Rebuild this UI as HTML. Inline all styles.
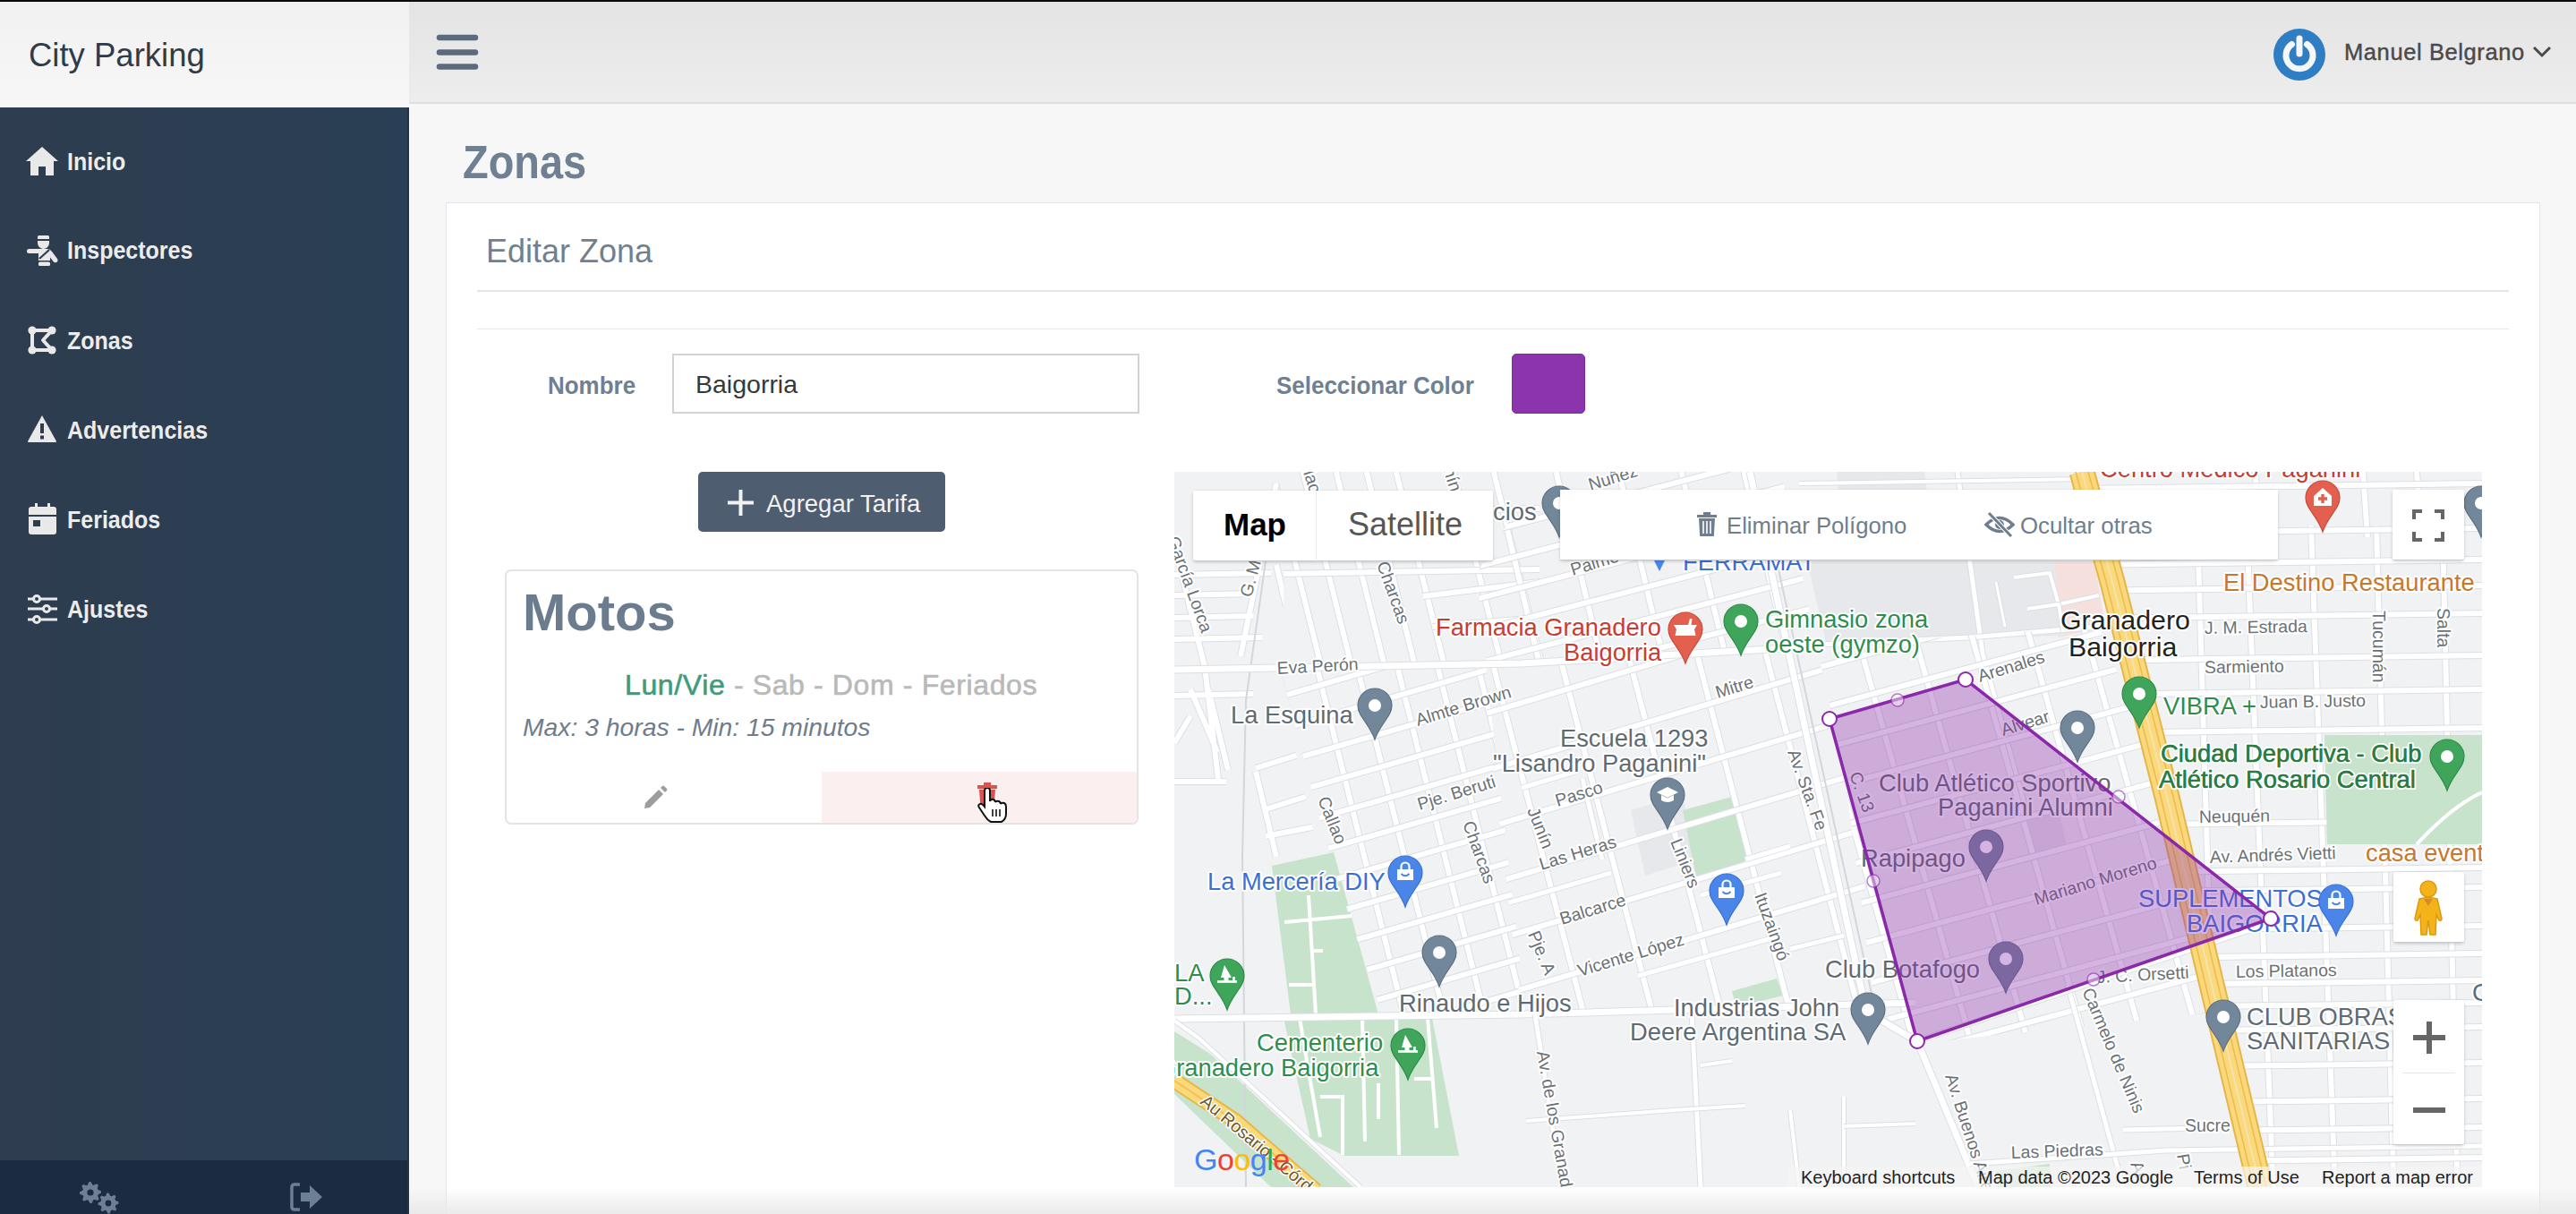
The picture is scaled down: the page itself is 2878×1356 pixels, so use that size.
<!DOCTYPE html>
<html><head><meta charset="utf-8"><title>City Parking - Zonas</title>
<style>
*{box-sizing:border-box;margin:0;padding:0}
html,body{width:2878px;height:1356px;overflow:hidden}
body{position:relative;background:#f7f7f7;font-family:"Liberation Sans",sans-serif}
.a{position:absolute;white-space:nowrap;line-height:1}
#topline{position:absolute;left:0;top:0;width:2878px;height:2px;background:#0a0a0a}
#brand{position:absolute;left:0;top:2px;width:457px;height:118px;background:linear-gradient(#f1f1f1,#f7f7f7)}
#topbar{position:absolute;left:457px;top:2px;width:2421px;height:114px;background:linear-gradient(#e4e4e4,#ededed);border-bottom:2px solid #dcdfe3}
#side{position:absolute;left:0;top:120px;width:457px;height:1176px;background:linear-gradient(90deg,#2e3d4f,#2a3f55)}
#sidefoot{position:absolute;left:0;top:1296px;width:457px;height:60px;background:#1b2b40}
#sideedge{position:absolute;left:455px;top:120px;width:2px;height:1236px;background:#243140}
.nav{position:absolute;left:75px;color:#ececec;font-weight:bold;font-size:25px}
.ico{position:absolute}
#card{position:absolute;left:498px;top:226px;width:2340px;height:1140px;background:#fff;border:1px solid #e3e6ea}
#bottomshade{position:absolute;left:457px;top:1326px;width:2421px;height:30px;background:linear-gradient(rgba(236,236,236,0.0),rgba(232,232,232,0.9))}
</style></head><body>
<div id="topline"></div><div id="brand"></div><div id="topbar"></div>
<div id="side"></div><div id="sidefoot"></div>
<div class="a" style="left:32.0px;top:44.1px;font-size:36.5px;color:#2f3b48;font-weight:normal;font-style:normal;">City Parking</div>
<svg class="ico" style="left:486px;top:36px" width="50" height="46" viewBox="0 0 50 46"><g stroke="#5a6b80" stroke-width="6.5" stroke-linecap="round"><line x1="5" y1="6" x2="45" y2="6"/><line x1="5" y1="22.5" x2="45" y2="22.5"/><line x1="5" y1="38.5" x2="45" y2="38.5"/></g></svg>
<svg class="ico" style="left:2538px;top:30px" width="62" height="62" viewBox="0 0 62 62"><circle cx="31" cy="31" r="29" fill="#2f7dc2"/><path d="M22.5 19.5 A15 15 0 1 0 39.5 19.5" fill="none" stroke="#f4f6f8" stroke-width="7" stroke-linecap="round"/><line x1="31" y1="13" x2="31" y2="30" stroke="#f4f6f8" stroke-width="7" stroke-linecap="round"/></svg>
<div class="a" style="left:2619.0px;top:46.4px;font-size:25.5px;color:#4a4a4a;font-weight:normal;font-style:normal;letter-spacing:0.6px;-webkit-text-stroke:0.45px #4a4a4a">Manuel Belgrano</div>
<svg class="ico" style="left:2828px;top:50px" width="24" height="16" viewBox="0 0 24 16"><path d="M3 3 L12 12 L21 3" fill="none" stroke="#4a4a4a" stroke-width="3"/></svg>
<div class="a" style="left:75.0px;top:166.9px;font-size:27.3px;color:#ececec;font-weight:bold;font-style:normal;transform:scaleX(0.916);transform-origin:0 0;">Inicio</div>
<div class="a" style="left:75.0px;top:265.9px;font-size:27.3px;color:#ececec;font-weight:bold;font-style:normal;transform:scaleX(0.916);transform-origin:0 0;">Inspectores</div>
<div class="a" style="left:75.0px;top:366.9px;font-size:27.3px;color:#ececec;font-weight:bold;font-style:normal;transform:scaleX(0.916);transform-origin:0 0;">Zonas</div>
<div class="a" style="left:75.0px;top:466.9px;font-size:27.3px;color:#ececec;font-weight:bold;font-style:normal;transform:scaleX(0.916);transform-origin:0 0;">Advertencias</div>
<div class="a" style="left:75.0px;top:566.9px;font-size:27.3px;color:#ececec;font-weight:bold;font-style:normal;transform:scaleX(0.916);transform-origin:0 0;">Feriados</div>
<div class="a" style="left:75.0px;top:666.9px;font-size:27.3px;color:#ececec;font-weight:bold;font-style:normal;transform:scaleX(0.916);transform-origin:0 0;">Ajustes</div>
<svg class="ico" style="left:27px;top:162px" width="40" height="36" viewBox="0 0 40 36"><path d="M20 2 L38 18 L33 18 L33 34 L24 34 L24 24 L16 24 L16 34 L7 34 L7 18 L2 18 Z" fill="#e9e9e9"/></svg>
<svg class="ico" style="left:30px;top:262px" width="36" height="36" viewBox="0 0 36 36"><path d="M12 2.5 Q12 1 13.5 1 L23.5 1 Q25 1 25 2.5 L25 5 L12 5Z" fill="#e9e9e9"/><path d="M12 7 h13 v2.5 a6.5 6.5 0 0 1 -13 0z" fill="#e9e9e9"/><path d="M2.5 16 h13 v5 h-13 a2.5 2.5 0 0 1 0 -5z" fill="#e9e9e9"/><path d="M13 16 L23 16 Q26 16 28 19 L34 27 Q35.5 29.5 33 31 Q31 32 29.5 30 L26 25.5 L26 29 L13 29Z" fill="#e9e9e9"/><line x1="14" y1="27" x2="25" y2="17" stroke="#2d3e51" stroke-width="2.2"/><rect x="13" y="30.5" width="13" height="4.5" rx="1.5" fill="#e9e9e9"/></svg>
<svg class="ico" style="left:31px;top:364px" width="32" height="32" viewBox="0 0 32 32"><path d="M5 5 L27 5 L17 16 L27 27 L5 27 Z" fill="none" stroke="#e9e9e9" stroke-width="4" stroke-linejoin="round"/><g fill="#e9e9e9"><circle cx="5" cy="5" r="4.6"/><circle cx="27" cy="5" r="4.6"/><circle cx="5" cy="27" r="4.6"/><circle cx="27" cy="27" r="4.6"/></g></svg>
<svg class="ico" style="left:30px;top:463px" width="34" height="32" viewBox="0 0 34 32"><path d="M17 1 L33 30 Q33 31 32 31 L2 31 Q1 31 1 30 Z" fill="#e9e9e9"/><rect x="15" y="10" width="4" height="11" fill="#2e3e50"/><rect x="15" y="23.5" width="4" height="4" fill="#2e3e50"/></svg>
<svg class="ico" style="left:32px;top:562px" width="31" height="35" viewBox="0 0 31 35"><rect x="7" y="0" width="3" height="6" fill="#e9e9e9"/><rect x="21" y="0" width="3" height="6" fill="#e9e9e9"/><path d="M3 4 h25 a3 3 0 0 1 3 3 v6 h-31 v-6 a3 3 0 0 1 3 -3z" fill="#e9e9e9"/><path d="M0 15 h31 v17 a3 3 0 0 1 -3 3 h-25 a3 3 0 0 1 -3 -3z" fill="#e9e9e9"/><rect x="5" y="19" width="8" height="7" fill="#2e3e50"/></svg>
<svg class="ico" style="left:30px;top:664px" width="35" height="34" viewBox="0 0 35 34"><g stroke="#e9e9e9" stroke-width="3" fill="none"><line x1="1" y1="5" x2="34" y2="5"/><line x1="1" y1="16" x2="34" y2="16"/><line x1="1" y1="28" x2="34" y2="28"/></g><g fill="#2e3e50" stroke="#e9e9e9" stroke-width="3"><circle cx="11" cy="5" r="3.5"/><circle cx="22" cy="16" r="3.5"/><circle cx="11" cy="28" r="3.5"/></g></svg>
<svg class="ico" style="left:86px;top:1318px" width="52" height="38" viewBox="0 0 52 38"><path d="M26.87,12.24 L26.99,14.59 L23.73,16.19 L23.14,17.85 L24.64,21.15 L23.06,22.89 L19.63,21.72 L18.03,22.47 L16.76,25.87 L14.41,25.99 L12.81,22.73 L11.15,22.14 L7.85,23.64 L6.11,22.06 L7.28,18.63 L6.53,17.03 L3.13,15.76 L3.01,13.41 L6.27,11.81 L6.86,10.15 L5.36,6.85 L6.94,5.11 L10.37,6.28 L11.97,5.53 L13.24,2.13 L15.59,2.01 L17.19,5.27 L18.85,5.86 L22.15,4.36 L23.89,5.94 L22.72,9.37 L23.47,10.97Z" fill="#6d7f95"/><circle cx="15" cy="14" r="3.6" fill="#1b2b40"/><path d="M46.38,24.31 L46.49,26.56 L43.34,28.09 L42.77,29.68 L44.24,32.85 L42.72,34.52 L39.42,33.38 L37.90,34.10 L36.69,37.38 L34.44,37.49 L32.91,34.34 L31.32,33.77 L28.15,35.24 L26.48,33.72 L27.62,30.42 L26.90,28.90 L23.62,27.69 L23.51,25.44 L26.66,23.91 L27.23,22.32 L25.76,19.15 L27.28,17.48 L30.58,18.62 L32.10,17.90 L33.31,14.62 L35.56,14.51 L37.09,17.66 L38.68,18.23 L41.85,16.76 L43.52,18.28 L42.38,21.58 L43.10,23.10Z" fill="#6d7f95"/><circle cx="35" cy="26" r="3.4" fill="#1b2b40"/></svg>
<svg class="ico" style="left:324px;top:1320px" width="38" height="34" viewBox="0 0 38 34"><path d="M11 3 L5 3 Q2 3 2 6 L2 28 Q2 31 5 31 L11 31" fill="none" stroke="#6d7f95" stroke-width="3.5"/><path d="M12 12 L22 12 L22 4 L36 17 L22 30 L22 22 L12 22 Z" fill="#6d7f95"/></svg>
<div class="a" style="left:517.0px;top:155.5px;font-size:51px;color:#6f8093;font-weight:bold;font-style:normal;transform:scaleX(0.92);transform-origin:0 0;">Zonas</div>
<div id="card"></div>
<div class="a" style="left:543.0px;top:261.5px;font-size:37px;color:#737f8d;font-weight:normal;font-style:normal;transform:scaleX(0.973);transform-origin:0 0;">Editar Zona</div>
<div class="a" style="left:533px;top:324px;width:2270px;height:2px;background:#e6e6e6"></div>
<div class="a" style="left:533px;top:367px;width:2270px;height:1px;background:#e9e9e9"></div>
<div class="a" style="left:612.0px;top:417.1px;font-size:27.6px;color:#6f8093;font-weight:bold;font-style:normal;transform:scaleX(0.941);transform-origin:0 0;">Nombre</div>
<div class="a" style="left:751px;top:395px;width:522px;height:67px;border:2px solid #d2d2d2;background:#fff"></div>
<div class="a" style="left:777.0px;top:414.9px;font-size:28.5px;color:#383838;font-weight:normal;font-style:normal;">Baigorria</div>
<div class="a" style="left:1426.0px;top:417.1px;font-size:27.6px;color:#6f8093;font-weight:bold;font-style:normal;transform:scaleX(0.941);transform-origin:0 0;">Seleccionar Color</div>
<div class="a" style="left:1689px;top:395px;width:82px;height:67px;background:#8c34ae;border-radius:5px;border:1px solid #7a2c9a"></div>
<div class="a" style="left:780px;top:527px;width:276px;height:67px;background:#4e5e70;border-radius:5px"></div>
<svg class="ico" style="left:812px;top:546px" width="31" height="31" viewBox="0 0 31 31"><g stroke="#f2f2f2" stroke-width="4"><line x1="15.5" y1="1" x2="15.5" y2="30"/><line x1="1" y1="15.5" x2="30" y2="15.5"/></g></svg>
<div class="a" style="left:856.0px;top:548.7px;font-size:27.5px;color:#f2f2f2;font-weight:normal;font-style:normal;">Agregar Tarifa</div>
<div class="a" style="left:564px;top:636px;width:708px;height:285px;border:2px solid #e4e4e4;border-radius:7px;background:#fff"></div>
<div class="a" style="left:918px;top:862px;width:352px;height:57px;background:#fcefef;border-bottom-right-radius:6px"></div>
<div class="a" style="left:584.0px;top:654.9px;font-size:58px;color:#6b7c8f;font-weight:bold;font-style:normal;">Motos</div>
<div class="a" style="left:698px;top:748.9px;font-size:32px;letter-spacing:0.63px"><span style="color:#3e9b7b;-webkit-text-stroke:0.6px #3e9b7b">Lun/Vie</span><span style="color:#b9b9b9;-webkit-text-stroke:0.6px #b9b9b9"> - Sab - Dom - Feriados</span></div>
<div class="a" style="left:584.0px;top:798.0px;font-size:28.3px;color:#6e7d8c;font-weight:normal;font-style:italic;">Max: 3 horas - Min: 15 minutos</div>
<svg class="ico" style="left:717px;top:876px" width="30" height="30" viewBox="0 0 30 30"><path d="M4 21 L19 6 L24 11 L9 26 L3 27 Z" fill="#9d9d9d"/><path d="M21 4 L23 2 Q24 1 25 2 L28 5 Q29 6 28 7 L26 9 Z" fill="#9d9d9d"/></svg>
<svg class="ico" style="left:1090px;top:874px" width="26" height="30" viewBox="0 0 26 30"><rect x="2" y="3" width="22" height="4" fill="#d9534f"/><rect x="9" y="0" width="8" height="4" fill="#d9534f"/><path d="M4 8 h18 l-1.5 20 h-15z" fill="#d9534f"/></svg>
<svg class="ico" style="left:1092px;top:880px" width="34" height="40" viewBox="0 0 34 40"><path d="M8 3 Q8 0 11 0 Q14 0 14 3 L14 15 Q15 12 18 13 Q20 14 20 16 Q21 14 24 15 Q26 16 26 18 Q27 16 30 17 Q32 18 32 21 L32 29 Q32 35 27 38 L15 38 Q11 36 8 31 L2 22 Q0 19 3 18 Q5 17 8 21 Z" fill="#fff" stroke="#111" stroke-width="2"/><g stroke="#111" stroke-width="1.6"><line x1="17" y1="24" x2="17" y2="32"/><line x1="21" y1="24" x2="21" y2="32"/><line x1="25" y1="24" x2="25" y2="32"/></g></svg>
<svg class="a" style="left:1312px;top:527px" width="1461" height="799" viewBox="1312 527 1461 799">
<defs><clipPath id="mc"><rect x="1312" y="527" width="1461" height="799"/></clipPath>
<clipPath id="rC"><polygon points="1440,527 2010,527 2075,1000 2095,1128 1545,1136 1470,940 1430,760"/></clipPath>
<clipPath id="rP"><polygon points="2010,527 2328,527 2360,650 2421,890 2470,1100 2380,1120 2150,1165 2095,1128 2075,1000"/></clipPath>
<clipPath id="rE"><polygon points="2328,527 2773,527 2773,1326 2525,1326 2421,890 2360,650"/></clipPath>
<clipPath id="rW"><polygon points="1312,527 1440,527 1430,760 1470,940 1545,1136 1312,1140"/></clipPath>
</defs>
<g clip-path="url(#mc)">
<rect x="1312" y="527" width="1461" height="799" fill="#f1f2f4"/>
<polygon points="1822,905 1880,888 1895,960 1838,978" fill="#e6e8eb"/>
<polygon points="2052,527 2150,527 2160,600 2060,610" fill="#e6e8eb"/>
<polygon points="2260,913 2300,905 2310,950 2270,958" fill="#e6e8eb"/>
<polygon points="2290,627 2340,627 2352,700 2300,712" fill="#f6e0dd"/>
<polygon points="1421,967 1490,952 1540,1133 1442,1133" fill="#c8e3cc"/>
<polygon points="1434,1137 1600,1137 1630,1291 1502,1291 1464,1272" fill="#c8e3cc"/>
<polygon points="1312,1152 1352,1177 1512,1326 1420,1326 1312,1222" fill="#c8e3cc"/>
<polygon points="2597,821 2773,821 2773,943 2600,943" fill="#c8e3cc"/>
<polygon points="1880,905 1935,890 1955,965 1895,980" fill="#c8e3cc"/>
<polygon points="2230,1308 2290,1300 2292,1326 2232,1326" fill="#c8e3cc"/>
<polygon points="1935,1107 1985,1093 1992,1112 1940,1125" fill="#c8e3cc"/>
<g stroke="#fff" stroke-width="4" fill="none"><path d="M1462 1000 L1470 1133 M1435 1030 L1510 1023 M1440 1100 L1468 1100 M1468 1062 L1478 1062"/><path d="M1452 1137 L1460 1185 L1475 1270 M1475 1225 L1500 1225 L1500 1290 M1522 1137 L1525 1275 M1560 1137 L1563 1290 M1580 1205 L1600 1205 M1595 1137 L1605 1260 M1540 1210 L1540 1250"/></g>
<clipPath id="rC1"><polygon points="1428,527 1720,527 1730,742 1440,745"/></clipPath>
<g clip-path="url(#rC1)"><path d="M1421.8 527.0L1476.2 745.0M1455.8 527.0L1510.2 745.0M1492.8 527.0L1547.2 745.0M1526.8 527.0L1581.2 745.0M1559.8 527.0L1614.2 745.0M1623.8 527.0L1678.2 745.0M1668.8 527.0L1723.2 745.0" stroke="#dcdfe3" stroke-width="8" fill="none"/><path d="M1421.8 527.0L1476.2 745.0M1455.8 527.0L1510.2 745.0M1492.8 527.0L1547.2 745.0M1526.8 527.0L1581.2 745.0M1559.8 527.0L1614.2 745.0M1623.8 527.0L1678.2 745.0M1668.8 527.0L1723.2 745.0" stroke="#ffffff" stroke-width="6" fill="none"/></g>
<g clip-path="url(#rC1)"><path d="M1428.0 574.0L1720.0 568.0M1428.0 641.0L1720.0 636.0M1590.0 666.0L1720.0 650.0M1600.0 700.0L1720.0 690.0" stroke="#dcdfe3" stroke-width="8" fill="none"/><path d="M1428.0 574.0L1720.0 568.0M1428.0 641.0L1720.0 636.0M1590.0 666.0L1720.0 650.0M1600.0 700.0L1720.0 690.0" stroke="#ffffff" stroke-width="6" fill="none"/></g>
<clipPath id="rC2w"><polygon points="1430,745 1660,742 1705,1134 1545,1136 1500,1000 1470,900"/></clipPath>
<g clip-path="url(#rC2w)"><path d="M1326.8 527.0L1526.5 1326.0M1371.8 527.0L1571.5 1326.0M1416.8 527.0L1616.5 1326.0M1461.8 527.0L1661.5 1326.0M1506.8 527.0L1706.5 1326.0M1551.8 527.0L1751.5 1326.0M1596.8 527.0L1796.5 1326.0" stroke="#dcdfe3" stroke-width="8" fill="none"/><path d="M1326.8 527.0L1526.5 1326.0M1371.8 527.0L1571.5 1326.0M1416.8 527.0L1616.5 1326.0M1461.8 527.0L1661.5 1326.0M1506.8 527.0L1706.5 1326.0M1551.8 527.0L1751.5 1326.0M1596.8 527.0L1796.5 1326.0" stroke="#ffffff" stroke-width="6" fill="none"/></g>
<g clip-path="url(#rC2w)"><path d="M1312.0 812.5L2773.0 388.8M1312.0 849.5L2773.0 425.8M1312.0 886.5L2773.0 462.8M1312.0 923.5L2773.0 499.8M1312.0 960.5L2773.0 536.8M1312.0 997.5L2773.0 573.8M1312.0 1034.5L2773.0 610.8M1312.0 1071.5L2773.0 647.8M1312.0 1108.5L2773.0 684.8M1312.0 1145.5L2773.0 721.8M1312.0 1182.5L2773.0 758.8M1312.0 1219.5L2773.0 795.8M1312.0 1256.5L2773.0 832.8" stroke="#dcdfe3" stroke-width="8" fill="none"/><path d="M1312.0 812.5L2773.0 388.8M1312.0 849.5L2773.0 425.8M1312.0 886.5L2773.0 462.8M1312.0 923.5L2773.0 499.8M1312.0 960.5L2773.0 536.8M1312.0 997.5L2773.0 573.8M1312.0 1034.5L2773.0 610.8M1312.0 1071.5L2773.0 647.8M1312.0 1108.5L2773.0 684.8M1312.0 1145.5L2773.0 721.8M1312.0 1182.5L2773.0 758.8M1312.0 1219.5L2773.0 795.8M1312.0 1256.5L2773.0 832.8" stroke="#ffffff" stroke-width="6" fill="none"/></g>
<clipPath id="rC2e"><polygon points="1655,742 2030,722 2060,860 2085,1000 2095,1128 1700,1134"/></clipPath>
<g clip-path="url(#rC2e)"><path d="M1535.0 527.0L1742.8 1326.0M1612.0 527.0L1819.8 1326.0M1689.0 527.0L1896.8 1326.0M1766.0 527.0L1973.8 1326.0M1843.0 527.0L2050.8 1326.0M1920.0 527.0L2127.8 1326.0M1997.0 527.0L2204.8 1326.0" stroke="#dcdfe3" stroke-width="8" fill="none"/><path d="M1535.0 527.0L1742.8 1326.0M1612.0 527.0L1819.8 1326.0M1689.0 527.0L1896.8 1326.0M1766.0 527.0L1973.8 1326.0M1843.0 527.0L2050.8 1326.0M1920.0 527.0L2127.8 1326.0M1997.0 527.0L2204.8 1326.0" stroke="#ffffff" stroke-width="6" fill="none"/></g>
<g clip-path="url(#rC2e)"><path d="M1312.0 837.4L2773.0 399.1M1312.0 901.4L2773.0 463.1M1312.0 965.4L2773.0 527.1M1312.0 1029.4L2773.0 591.1M1312.0 1093.4L2773.0 655.1M1312.0 1157.4L2773.0 719.1M1312.0 1221.4L2773.0 783.1" stroke="#dcdfe3" stroke-width="8" fill="none"/><path d="M1312.0 837.4L2773.0 399.1M1312.0 901.4L2773.0 463.1M1312.0 965.4L2773.0 527.1M1312.0 1029.4L2773.0 591.1M1312.0 1093.4L2773.0 655.1M1312.0 1157.4L2773.0 719.1M1312.0 1221.4L2773.0 783.1" stroke="#ffffff" stroke-width="6" fill="none"/></g>
<g clip-path="url(#rC2e)"><path d="M1680.0 1010.0L1800.0 975.0M1900.0 1000.0L1990.0 975.0M1768.0 870.0L1790.0 960.0M1950.0 960.0L2000.0 945.0M1700.0 880.0L1760.0 862.0M2000.0 1060.0L2060.0 1045.0M1830.0 1090.0L1990.0 1045.0" stroke="#dcdfe3" stroke-width="7" fill="none"/><path d="M1680.0 1010.0L1800.0 975.0M1900.0 1000.0L1990.0 975.0M1768.0 870.0L1790.0 960.0M1950.0 960.0L2000.0 945.0M1700.0 880.0L1760.0 862.0M2000.0 1060.0L2060.0 1045.0M1830.0 1090.0L1990.0 1045.0" stroke="#ffffff" stroke-width="5" fill="none"/></g>
<clipPath id="rC3"><polygon points="1720,527 1990,527 2030,722 1660,742 1650,640"/></clipPath>
<g clip-path="url(#rC3)"><path d="M1598.5 527.0L1790.2 1326.0M1668.5 527.0L1860.2 1326.0M1738.5 527.0L1930.2 1326.0M1808.5 527.0L2000.2 1326.0M1878.5 527.0L2070.2 1326.0M1948.5 527.0L2140.2 1326.0" stroke="#dcdfe3" stroke-width="8" fill="none"/><path d="M1598.5 527.0L1790.2 1326.0M1668.5 527.0L1860.2 1326.0M1738.5 527.0L1930.2 1326.0M1808.5 527.0L2000.2 1326.0M1878.5 527.0L2070.2 1326.0M1948.5 527.0L2140.2 1326.0" stroke="#ffffff" stroke-width="6" fill="none"/></g>
<g clip-path="url(#rC3)"><path d="M1312.0 684.9L2773.0 305.0M1312.0 720.9L2773.0 341.0M1312.0 756.9L2773.0 377.0M1312.0 792.9L2773.0 413.0M1312.0 828.9L2773.0 449.0M1312.0 864.9L2773.0 485.0" stroke="#dcdfe3" stroke-width="8" fill="none"/><path d="M1312.0 684.9L2773.0 305.0M1312.0 720.9L2773.0 341.0M1312.0 756.9L2773.0 377.0M1312.0 792.9L2773.0 413.0M1312.0 828.9L2773.0 449.0M1312.0 864.9L2773.0 485.0" stroke="#ffffff" stroke-width="6" fill="none"/></g>
<polygon points="2019,627 2295,627 2305,710 2040,717" fill="#e7e8eb"/>
<path d="M2187 527 L2215 730 L2262 900" stroke="#dcdfe3" stroke-width="7" fill="none" stroke-linejoin="round"/><path d="M2187 527 L2215 730 L2262 900" stroke="#fff" stroke-width="5" fill="none" stroke-linejoin="round"/>
<path d="M2030 720 L2200 712 L2345 700" stroke="#dcdfe3" stroke-width="7" fill="none" stroke-linejoin="round"/><path d="M2030 720 L2200 712 L2345 700" stroke="#fff" stroke-width="5" fill="none" stroke-linejoin="round"/>
<path d="M2010 540 L2330 535" stroke="#dcdfe3" stroke-width="6" fill="none" stroke-linejoin="round"/><path d="M2010 540 L2330 535" stroke="#fff" stroke-width="4" fill="none" stroke-linejoin="round"/>
<path d="M2250 645 L2290 640 L2300 675 L2345 665" stroke="#dcdfe3" stroke-width="6" fill="none" stroke-linejoin="round"/><path d="M2250 645 L2290 640 L2300 675 L2345 665" stroke="#fff" stroke-width="4" fill="none" stroke-linejoin="round"/>
<path d="M2265 680 L2300 675 L2305 705" stroke="#dcdfe3" stroke-width="6" fill="none" stroke-linejoin="round"/><path d="M2265 680 L2300 675 L2305 705" stroke="#fff" stroke-width="4" fill="none" stroke-linejoin="round"/>
<path d="M2240 700 L2230 650" stroke="#dcdfe3" stroke-width="5" fill="none" stroke-linejoin="round"/><path d="M2240 700 L2230 650" stroke="#fff" stroke-width="3" fill="none" stroke-linejoin="round"/>
<clipPath id="rP2"><polygon points="2030,722 2345,700 2421,890 2480,1130 2150,1165 2095,1128 2060,860"/></clipPath>
<g clip-path="url(#rP2)"><path d="M1895.6 527.0L2119.3 1326.0M1959.6 527.0L2183.3 1326.0M2023.6 527.0L2247.3 1326.0M2087.6 527.0L2311.3 1326.0M2151.6 527.0L2375.3 1326.0M2215.6 527.0L2439.3 1326.0M2279.6 527.0L2503.3 1326.0M2343.6 527.0L2567.3 1326.0" stroke="#dcdfe3" stroke-width="8" fill="none"/><path d="M1895.6 527.0L2119.3 1326.0M1959.6 527.0L2183.3 1326.0M2023.6 527.0L2247.3 1326.0M2087.6 527.0L2311.3 1326.0M2151.6 527.0L2375.3 1326.0M2215.6 527.0L2439.3 1326.0M2279.6 527.0L2503.3 1326.0M2343.6 527.0L2567.3 1326.0" stroke="#ffffff" stroke-width="6" fill="none"/></g>
<g clip-path="url(#rP2)"><path d="M1312.0 939.8L2773.0 545.3M1312.0 985.8L2773.0 591.3M1312.0 1031.8L2773.0 637.3M1312.0 1077.8L2773.0 683.3M1312.0 1123.8L2773.0 729.3M1312.0 1169.8L2773.0 775.3M1312.0 1215.8L2773.0 821.3M1312.0 1261.8L2773.0 867.3M1312.0 1307.8L2773.0 913.3M1312.0 1353.8L2773.0 959.3M1312.0 1399.8L2773.0 1005.3M1312.0 1445.8L2773.0 1051.3" stroke="#dcdfe3" stroke-width="8" fill="none"/><path d="M1312.0 939.8L2773.0 545.3M1312.0 985.8L2773.0 591.3M1312.0 1031.8L2773.0 637.3M1312.0 1077.8L2773.0 683.3M1312.0 1123.8L2773.0 729.3M1312.0 1169.8L2773.0 775.3M1312.0 1215.8L2773.0 821.3M1312.0 1261.8L2773.0 867.3M1312.0 1307.8L2773.0 913.3M1312.0 1353.8L2773.0 959.3M1312.0 1399.8L2773.0 1005.3M1312.0 1445.8L2773.0 1051.3" stroke="#ffffff" stroke-width="6" fill="none"/></g>
<g clip-path="url(#rE)"><path d="M2455.0 587.0L2477.2 1326.0M2510.0 587.0L2539.6 1326.0M2582.0 587.0L2608.6 1326.0M2655.0 587.0L2674.2 1326.0M2729.0 587.0L2745.3 1326.0" stroke="#dcdfe3" stroke-width="8" fill="none"/><path d="M2455.0 587.0L2477.2 1326.0M2510.0 587.0L2539.6 1326.0M2582.0 587.0L2608.6 1326.0M2655.0 587.0L2674.2 1326.0M2729.0 587.0L2745.3 1326.0" stroke="#ffffff" stroke-width="6" fill="none"/></g>
<g clip-path="url(#rE)"><path d="M2640.0 527.0L2645.0 600.0M2520.0 527.0L2522.0 590.0M2700.0 527.0L2705.0 600.0" stroke="#dcdfe3" stroke-width="8" fill="none"/><path d="M2640.0 527.0L2645.0 600.0M2520.0 527.0L2522.0 590.0M2700.0 527.0L2705.0 600.0" stroke="#ffffff" stroke-width="6" fill="none"/></g>
<g clip-path="url(#rE)"><path d="M2328.0 546.0L2773.0 540.0M2328.0 596.0L2773.0 590.0M2328.0 631.0L2773.0 625.0M2328.0 660.0L2773.0 654.0M2328.0 691.0L2773.0 685.0M2328.0 738.0L2773.0 732.0M2328.0 776.0L2773.0 770.0M2328.0 819.0L2773.0 813.0M2328.0 922.0L2773.0 916.0M2328.0 975.0L2773.0 969.0M2328.0 997.0L2773.0 991.0M2328.0 1040.0L2773.0 1034.0M2328.0 1071.0L2773.0 1065.0M2328.0 1101.0L2773.0 1095.0M2328.0 1126.0L2773.0 1120.0M2328.0 1153.0L2773.0 1147.0M2328.0 1193.0L2773.0 1187.0M2328.0 1233.0L2773.0 1227.0M2328.0 1265.0L2773.0 1259.0M2328.0 1299.0L2773.0 1293.0" stroke="#dcdfe3" stroke-width="8" fill="none"/><path d="M2328.0 546.0L2773.0 540.0M2328.0 596.0L2773.0 590.0M2328.0 631.0L2773.0 625.0M2328.0 660.0L2773.0 654.0M2328.0 691.0L2773.0 685.0M2328.0 738.0L2773.0 732.0M2328.0 776.0L2773.0 770.0M2328.0 819.0L2773.0 813.0M2328.0 922.0L2773.0 916.0M2328.0 975.0L2773.0 969.0M2328.0 997.0L2773.0 991.0M2328.0 1040.0L2773.0 1034.0M2328.0 1071.0L2773.0 1065.0M2328.0 1101.0L2773.0 1095.0M2328.0 1126.0L2773.0 1120.0M2328.0 1153.0L2773.0 1147.0M2328.0 1193.0L2773.0 1187.0M2328.0 1233.0L2773.0 1227.0M2328.0 1265.0L2773.0 1259.0M2328.0 1299.0L2773.0 1293.0" stroke="#ffffff" stroke-width="6" fill="none"/></g>
<polygon points="2597,821 2773,821 2773,943 2600,943" fill="#c8e3cc"/>
<path d="M2700 943 Q2740 900 2773 885" stroke="#fff" stroke-width="4" fill="none"/>
<g clip-path="url(#rW)"><path d="M1312.0 608.0L1346.0 745.0M1346.0 745.0L1361.0 870.0M1312.0 642.0L1420.0 640.0M1312.0 665.0L1400.0 663.0M1312.0 690.0L1400.0 688.0M1312.0 714.0L1410.0 712.0M1312.0 777.0L1400.0 775.0M1312.0 873.0L1370.0 873.0M1426.0 540.0L1386.0 733.0M1426.0 631.0L1482.0 870.0M1482.0 870.0L1501.0 957.0M1403.0 862.0L1426.0 957.0M1403.0 858.0L1512.0 824.0M1414.0 904.0L1512.0 873.0M1414.0 934.0L1512.0 915.0M1330.0 770.0L1360.0 840.0M1350.0 770.0L1372.0 860.0M1312.0 830.0L1330.0 800.0" stroke="#dcdfe3" stroke-width="8" fill="none"/><path d="M1312.0 608.0L1346.0 745.0M1346.0 745.0L1361.0 870.0M1312.0 642.0L1420.0 640.0M1312.0 665.0L1400.0 663.0M1312.0 690.0L1400.0 688.0M1312.0 714.0L1410.0 712.0M1312.0 777.0L1400.0 775.0M1312.0 873.0L1370.0 873.0M1426.0 540.0L1386.0 733.0M1426.0 631.0L1482.0 870.0M1482.0 870.0L1501.0 957.0M1403.0 862.0L1426.0 957.0M1403.0 858.0L1512.0 824.0M1414.0 904.0L1512.0 873.0M1414.0 934.0L1512.0 915.0M1330.0 770.0L1360.0 840.0M1350.0 770.0L1372.0 860.0M1312.0 830.0L1330.0 800.0" stroke="#ffffff" stroke-width="6" fill="none"/></g>
<path d="M1414 627 L1392 782 L1388 957 L1392 1326" stroke="#d3d6da" stroke-width="2" fill="none"/>
<path d="M1312 748 L1700 741 L2030 722" stroke="#dcdfe3" stroke-width="9" fill="none" stroke-linejoin="round"/><path d="M1312 748 L1700 741 L2030 722" stroke="#fff" stroke-width="7" fill="none" stroke-linejoin="round"/>
<path d="M1312 1138 L1700 1133 L2140 1120" stroke="#dcdfe3" stroke-width="9" fill="none" stroke-linejoin="round"/><path d="M1312 1138 L1700 1133 L2140 1120" stroke="#fff" stroke-width="7" fill="none" stroke-linejoin="round"/>
<path d="M1955 527 L2085 1130 L2142 1163 L2210 1326" stroke="#dcdfe3" stroke-width="9" fill="none" stroke-linejoin="round"/><path d="M1955 527 L2085 1130 L2142 1163 L2210 1326" stroke="#fff" stroke-width="7" fill="none" stroke-linejoin="round"/>
<path d="M1985 627 L2095 1128" stroke="#d3d6da" stroke-width="2" fill="none"/>
<path d="M1715 1133 L1745 1326" stroke="#dcdfe3" stroke-width="7" fill="none" stroke-linejoin="round"/><path d="M1715 1133 L1745 1326" stroke="#fff" stroke-width="5" fill="none" stroke-linejoin="round"/>
<path d="M1890 1130 L1900 1326" stroke="#dcdfe3" stroke-width="7" fill="none" stroke-linejoin="round"/><path d="M1890 1130 L1900 1326" stroke="#fff" stroke-width="5" fill="none" stroke-linejoin="round"/>
<path d="M1705 1252 L1870 1240 L1950 1235" stroke="#dcdfe3" stroke-width="6" fill="none" stroke-linejoin="round"/><path d="M1705 1252 L1870 1240 L1950 1235" stroke="#fff" stroke-width="4" fill="none" stroke-linejoin="round"/>
<path d="M1900 1190 L1935 1185" stroke="#dcdfe3" stroke-width="6" fill="none" stroke-linejoin="round"/><path d="M1900 1190 L1935 1185" stroke="#fff" stroke-width="4" fill="none" stroke-linejoin="round"/>
<path d="M2000 1240 L2010 1326" stroke="#dcdfe3" stroke-width="6" fill="none" stroke-linejoin="round"/><path d="M2000 1240 L2010 1326" stroke="#fff" stroke-width="4" fill="none" stroke-linejoin="round"/>
<path d="M2060 1225 L2060 1326" stroke="#dcdfe3" stroke-width="6" fill="none" stroke-linejoin="round"/><path d="M2060 1225 L2060 1326" stroke="#fff" stroke-width="4" fill="none" stroke-linejoin="round"/>
<path d="M2060 1258 L2140 1255" stroke="#dcdfe3" stroke-width="6" fill="none" stroke-linejoin="round"/><path d="M2060 1258 L2140 1255" stroke="#fff" stroke-width="4" fill="none" stroke-linejoin="round"/>
<path d="M2310 1100 L2372 1326" stroke="#dcdfe3" stroke-width="7" fill="none" stroke-linejoin="round"/><path d="M2310 1100 L2372 1326" stroke="#fff" stroke-width="5" fill="none" stroke-linejoin="round"/>
<path d="M2200 1300 L2420 1285 L2773 1280" stroke="#dcdfe3" stroke-width="7" fill="none" stroke-linejoin="round"/><path d="M2200 1300 L2420 1285 L2773 1280" stroke="#fff" stroke-width="5" fill="none" stroke-linejoin="round"/>
<path d="M2372 1262 L2460 1260" stroke="#dcdfe3" stroke-width="7" fill="none" stroke-linejoin="round"/><path d="M2372 1262 L2460 1260" stroke="#fff" stroke-width="5" fill="none" stroke-linejoin="round"/>
<path d="M2142 1163 L2540 1030" stroke="#dcdfe3" stroke-width="7" fill="none" stroke-linejoin="round"/><path d="M2142 1163 L2540 1030" stroke="#fff" stroke-width="5" fill="none" stroke-linejoin="round"/>
<path d="M2326 527 L2360 650 L2421 890 L2525 1326" stroke="#e6b54a" stroke-width="29" fill="none"/><path d="M2326 527 L2360 650 L2421 890 L2525 1326" stroke="#fbd97a" stroke-width="25" fill="none"/><path d="M2326 527 L2360 650 L2421 890 L2525 1326" stroke="#f3e3b0" stroke-width="2" fill="none"/><path d="M2326 527 L2360 650 L2421 890 L2525 1326" stroke="#e9bb50" stroke-width="1.5" fill="none" transform="translate(-7,0)"/><path d="M2326 527 L2360 650 L2421 890 L2525 1326" stroke="#e9bb50" stroke-width="1.5" fill="none" transform="translate(7,0)"/>
<path d="M1312 1207 L1380 1252 L1470 1330" stroke="#e8b74a" stroke-width="18" fill="none"/><path d="M1312 1207 L1380 1252 L1470 1330" stroke="#fbd97a" stroke-width="14" fill="none"/><path d="M1312 1207 L1380 1252 L1470 1330" stroke="#f0c355" stroke-width="2" fill="none"/>
<path d="M1312 1140 L1340 1160 L1520 1326" stroke="#dcdfe3" stroke-width="6" fill="none" stroke-linejoin="round"/><path d="M1312 1140 L1340 1160 L1520 1326" stroke="#fff" stroke-width="4" fill="none" stroke-linejoin="round"/>
<g font-family="Liberation Sans, sans-serif">
<text x="1427" y="753" font-size="19.5" fill="#6b7277" stroke="#fff" stroke-width="4" stroke-linejoin="round" paint-order="stroke" transform="rotate(-3 1427 753)">Eva Perón</text>
<text x="1584" y="811" font-size="19.5" fill="#6b7277" stroke="#fff" stroke-width="4" stroke-linejoin="round" paint-order="stroke" transform="rotate(-17 1584 811)">Almte Brown</text>
<text x="1586" y="905" font-size="19.5" fill="#6b7277" stroke="#fff" stroke-width="4" stroke-linejoin="round" paint-order="stroke" transform="rotate(-17 1586 905)">Pje. Beruti</text>
<text x="1740" y="901" font-size="19.5" fill="#6b7277" stroke="#fff" stroke-width="4" stroke-linejoin="round" paint-order="stroke" transform="rotate(-17 1740 901)">Pasco</text>
<text x="1722" y="972" font-size="19.5" fill="#6b7277" stroke="#fff" stroke-width="4" stroke-linejoin="round" paint-order="stroke" transform="rotate(-17 1722 972)">Las Heras</text>
<text x="1745" y="1033" font-size="19.5" fill="#6b7277" stroke="#fff" stroke-width="4" stroke-linejoin="round" paint-order="stroke" transform="rotate(-17 1745 1033)">Balcarce</text>
<text x="1765" y="1091" font-size="19.5" fill="#6b7277" stroke="#fff" stroke-width="4" stroke-linejoin="round" paint-order="stroke" transform="rotate(-17 1765 1091)">Vicente López</text>
<text x="1919" y="780" font-size="19.5" fill="#6b7277" stroke="#fff" stroke-width="4" stroke-linejoin="round" paint-order="stroke" transform="rotate(-17 1919 780)">Mitre</text>
<text x="1757" y="643" font-size="19.5" fill="#6b7277" stroke="#fff" stroke-width="4" stroke-linejoin="round" paint-order="stroke" transform="rotate(-17 1757 643)">Palme</text>
<text x="2212" y="762" font-size="19.5" fill="#6b7277" stroke="#fff" stroke-width="4" stroke-linejoin="round" paint-order="stroke" transform="rotate(-17 2212 762)">Arenales</text>
<text x="2238" y="822" font-size="19.5" fill="#6b7277" stroke="#fff" stroke-width="4" stroke-linejoin="round" paint-order="stroke" transform="rotate(-17 2238 822)">Alvear</text>
<text x="2275" y="1011" font-size="19.5" fill="#6b7277" stroke="#fff" stroke-width="4" stroke-linejoin="round" paint-order="stroke" transform="rotate(-17 2275 1011)">Mariano Moreno</text>
<text x="1538" y="630" font-size="19.5" fill="#6b7277" stroke="#fff" stroke-width="4" stroke-linejoin="round" paint-order="stroke" transform="rotate(70 1538 630)">Charcas</text>
<text x="1634" y="920" font-size="19.5" fill="#6b7277" stroke="#fff" stroke-width="4" stroke-linejoin="round" paint-order="stroke" transform="rotate(70 1634 920)">Charcas</text>
<text x="1472" y="893" font-size="19.5" fill="#6b7277" stroke="#fff" stroke-width="4" stroke-linejoin="round" paint-order="stroke" transform="rotate(68 1472 893)">Callao</text>
<text x="1706" y="905" font-size="19.5" fill="#6b7277" stroke="#fff" stroke-width="4" stroke-linejoin="round" paint-order="stroke" transform="rotate(68 1706 905)">Junín</text>
<text x="1866" y="940" font-size="19.5" fill="#6b7277" stroke="#fff" stroke-width="4" stroke-linejoin="round" paint-order="stroke" transform="rotate(68 1866 940)">Liniers</text>
<text x="1960" y="1000" font-size="19.5" fill="#6b7277" stroke="#fff" stroke-width="4" stroke-linejoin="round" paint-order="stroke" transform="rotate(70 1960 1000)">Ituzaingó</text>
<text x="1707" y="1043" font-size="19.5" fill="#6b7277" stroke="#fff" stroke-width="4" stroke-linejoin="round" paint-order="stroke" transform="rotate(68 1707 1043)">Pje. A</text>
<text x="1997" y="840" font-size="19.5" fill="#6b7277" stroke="#fff" stroke-width="4" stroke-linejoin="round" paint-order="stroke" transform="rotate(70 1997 840)">Av. Sta. Fe</text>
<text x="2066" y="865" font-size="19.5" fill="#6b7277" stroke="#fff" stroke-width="4" stroke-linejoin="round" paint-order="stroke" transform="rotate(70 2066 865)">C. 13</text>
<text x="1717" y="1175" font-size="19.5" fill="#6b7277" stroke="#fff" stroke-width="4" stroke-linejoin="round" paint-order="stroke" transform="rotate(80 1717 1175)">Av. de los Granaderos</text>
<text x="2173" y="1202" font-size="19.5" fill="#6b7277" stroke="#fff" stroke-width="4" stroke-linejoin="round" paint-order="stroke" transform="rotate(72 2173 1202)">Av. Buenos Aires</text>
<text x="2326" y="1107" font-size="19.5" fill="#6b7277" stroke="#fff" stroke-width="4" stroke-linejoin="round" paint-order="stroke" transform="rotate(67 2326 1107)">Carmelo de Ninis</text>
<text x="1398" y="668" font-size="19.5" fill="#6b7277" stroke="#fff" stroke-width="4" stroke-linejoin="round" paint-order="stroke" transform="rotate(-75 1398 668)">G. Ma</text>
<text x="1304" y="602" font-size="19.5" fill="#6b7277" stroke="#fff" stroke-width="4" stroke-linejoin="round" paint-order="stroke" transform="rotate(70 1304 602)">García Lorca</text>
<text x="2463" y="708" font-size="19.5" fill="#6b7277" stroke="#fff" stroke-width="4" stroke-linejoin="round" paint-order="stroke" transform="rotate(-1 2463 708)">J. M. Estrada</text>
<text x="2463" y="752" font-size="19.5" fill="#6b7277" stroke="#fff" stroke-width="4" stroke-linejoin="round" paint-order="stroke" transform="rotate(-1 2463 752)">Sarmiento</text>
<text x="2525" y="791" font-size="19.5" fill="#6b7277" stroke="#fff" stroke-width="4" stroke-linejoin="round" paint-order="stroke" transform="rotate(-1 2525 791)">Juan B. Justo</text>
<text x="2457" y="919" font-size="19.5" fill="#6b7277" stroke="#fff" stroke-width="4" stroke-linejoin="round" paint-order="stroke" transform="rotate(-1 2457 919)">Neuquén</text>
<text x="2469" y="964" font-size="19.5" fill="#6b7277" stroke="#fff" stroke-width="4" stroke-linejoin="round" paint-order="stroke" transform="rotate(-2 2469 964)">Av. Andrés Vietti</text>
<text x="2343" y="1098" font-size="19.5" fill="#6b7277" stroke="#fff" stroke-width="4" stroke-linejoin="round" paint-order="stroke" transform="rotate(-3 2343 1098)">J. C. Orsetti</text>
<text x="2498" y="1092" font-size="19.5" fill="#6b7277" stroke="#fff" stroke-width="4" stroke-linejoin="round" paint-order="stroke" transform="rotate(-1 2498 1092)">Los Platanos</text>
<text x="2441" y="1264" font-size="19.5" fill="#6b7277" stroke="#fff" stroke-width="4" stroke-linejoin="round" paint-order="stroke">Sucre</text>
<text x="2247" y="1294" font-size="19.5" fill="#6b7277" stroke="#fff" stroke-width="4" stroke-linejoin="round" paint-order="stroke" transform="rotate(-2 2247 1294)">Las Piedras</text>
<text x="2651" y="682" font-size="19.5" fill="#6b7277" stroke="#fff" stroke-width="4" stroke-linejoin="round" paint-order="stroke" transform="rotate(90 2651 682)">Tucumán</text>
<text x="2723" y="679" font-size="19.5" fill="#6b7277" stroke="#fff" stroke-width="4" stroke-linejoin="round" paint-order="stroke" transform="rotate(90 2723 679)">Salta</text>
<text x="2380" y="1300" font-size="19.5" fill="#6b7277" stroke="#fff" stroke-width="4" stroke-linejoin="round" paint-order="stroke" transform="rotate(70 2380 1300)">Ar</text>
<text x="2432" y="1290" font-size="19.5" fill="#6b7277" stroke="#fff" stroke-width="4" stroke-linejoin="round" paint-order="stroke" transform="rotate(80 2432 1290)">Pi</text>
<text x="1340" y="1232" font-size="19.5" fill="#6b5a2e" stroke="#fff" stroke-width="3" stroke-linejoin="round" paint-order="stroke" transform="rotate(40 1340 1232)">Au Rosario - Córdoba</text>
<text x="1777" y="548" font-size="19.5" fill="#6b7277" stroke="#fff" stroke-width="4" stroke-linejoin="round" paint-order="stroke" transform="rotate(-17 1777 548)">Nuñez</text>
<text x="1447" y="500" font-size="19.5" fill="#6b7277" stroke="#fff" stroke-width="4" stroke-linejoin="round" paint-order="stroke" transform="rotate(72 1447 500)">Callao</text>
<text x="1606" y="505" font-size="19.5" fill="#6b7277" stroke="#fff" stroke-width="4" stroke-linejoin="round" paint-order="stroke" transform="rotate(72 1606 505)">Junín</text>
<text x="1668" y="581" font-size="27.3" fill="#5f6b73" stroke="#fff" stroke-width="4" stroke-linejoin="round" paint-order="stroke">cios</text>
<text x="1604" y="710" font-size="27.3" fill="#c83c32" stroke="#fff" stroke-width="4" stroke-linejoin="round" paint-order="stroke">Farmacia Granadero</text>
<text x="1747" y="738" font-size="27.3" fill="#c83c32" stroke="#fff" stroke-width="4" stroke-linejoin="round" paint-order="stroke">Baigorria</text>
<text x="1972" y="701" font-size="27.3" fill="#2f8d4c" stroke="#fff" stroke-width="4" stroke-linejoin="round" paint-order="stroke">Gimnasio zona</text>
<text x="1972" y="729" font-size="27.3" fill="#2f8d4c" stroke="#fff" stroke-width="4" stroke-linejoin="round" paint-order="stroke">oeste (gymzo)</text>
<text x="1375" y="808" font-size="27.3" fill="#5f6b73" stroke="#fff" stroke-width="4" stroke-linejoin="round" paint-order="stroke">La Esquina</text>
<text x="1743" y="834" font-size="27.3" fill="#5f6b73" stroke="#fff" stroke-width="4" stroke-linejoin="round" paint-order="stroke">Escuela 1293</text>
<text x="1668" y="862" font-size="27.3" fill="#5f6b73" stroke="#fff" stroke-width="4" stroke-linejoin="round" paint-order="stroke">"Lisandro Paganini"</text>
<text x="2099" y="884" font-size="27.3" fill="#5f6b73" stroke="#fff" stroke-width="4" stroke-linejoin="round" paint-order="stroke">Club Atlético Sportivo</text>
<text x="2165" y="911" font-size="27.3" fill="#5f6b73" stroke="#fff" stroke-width="4" stroke-linejoin="round" paint-order="stroke">Paganini Alumni</text>
<text x="2079" y="968" font-size="27.3" fill="#5f6b73" stroke="#fff" stroke-width="4" stroke-linejoin="round" paint-order="stroke">Rapipago</text>
<text x="2039" y="1092" font-size="27.3" fill="#5f6b73" stroke="#fff" stroke-width="4" stroke-linejoin="round" paint-order="stroke">Club Botafogo</text>
<text x="1870" y="1135" font-size="27.3" fill="#5f6b73" stroke="#fff" stroke-width="4" stroke-linejoin="round" paint-order="stroke">Industrias John</text>
<text x="1821" y="1162" font-size="27.3" fill="#5f6b73" stroke="#fff" stroke-width="4" stroke-linejoin="round" paint-order="stroke">Deere Argentina SA</text>
<text x="1563" y="1130" font-size="27.3" fill="#5f6b73" stroke="#fff" stroke-width="4" stroke-linejoin="round" paint-order="stroke">Rinaudo e Hijos</text>
<text x="1349" y="994" font-size="27.3" fill="#3a6fd6" stroke="#fff" stroke-width="4" stroke-linejoin="round" paint-order="stroke">La Mercería DIY</text>
<text x="1312" y="1096" font-size="27.3" fill="#2f8d4c" stroke="#fff" stroke-width="4" stroke-linejoin="round" paint-order="stroke">LA</text>
<text x="1312" y="1122" font-size="27.3" fill="#2f8d4c" stroke="#fff" stroke-width="4" stroke-linejoin="round" paint-order="stroke">D...</text>
<text x="1404" y="1174" font-size="27.3" fill="#2f8d4c" stroke="#fff" stroke-width="4" stroke-linejoin="round" paint-order="stroke">Cementerio</text>
<text x="1293" y="1202" font-size="27.3" fill="#2f8d4c" stroke="#fff" stroke-width="4" stroke-linejoin="round" paint-order="stroke">Granadero Baigorria</text>
<text x="2302" y="703" font-size="30.3" fill="#222" stroke="#fff" stroke-width="4" stroke-linejoin="round" paint-order="stroke">Granadero</text>
<text x="2311" y="733" font-size="30.3" fill="#222" stroke="#fff" stroke-width="4" stroke-linejoin="round" paint-order="stroke">Baigorria</text>
<text x="2484" y="660" font-size="27.3" fill="#c8772e" stroke="#fff" stroke-width="4" stroke-linejoin="round" paint-order="stroke">El Destino Restaurante</text>
<text x="2346" y="533" font-size="27.3" fill="#c83c32" stroke="#fff" stroke-width="4" stroke-linejoin="round" paint-order="stroke">Centro Médico Paganini</text>
<text x="2417" y="798" font-size="27.3" fill="#2f8d4c" stroke="#fff" stroke-width="4" stroke-linejoin="round" paint-order="stroke">VIBRA +</text>
<text x="2414" y="851" font-size="27.3" fill="#2b7c43" stroke="#fff" stroke-width="4" stroke-linejoin="round" paint-order="stroke">Ciudad Deportiva - Club</text>
<text x="2414" y="851" font-size="27.3" fill="#2b7c43" stroke="#2b7c43" stroke-width="0.35">Ciudad Deportiva - Club</text>
<text x="2412" y="880" font-size="27.3" fill="#2b7c43" stroke="#fff" stroke-width="4" stroke-linejoin="round" paint-order="stroke">Atlético Rosario Central</text>
<text x="2412" y="880" font-size="27.3" fill="#2b7c43" stroke="#2b7c43" stroke-width="0.35">Atlético Rosario Central</text>
<text x="2643" y="962" font-size="27.3" fill="#c8772e" stroke="#fff" stroke-width="4" stroke-linejoin="round" paint-order="stroke">casa eventos</text>
<text x="2389" y="1013" font-size="27.3" fill="#3a6fd6" stroke="#fff" stroke-width="4" stroke-linejoin="round" paint-order="stroke">SUPLEMENTOS</text>
<text x="2443" y="1041" font-size="27.3" fill="#3a6fd6" stroke="#fff" stroke-width="4" stroke-linejoin="round" paint-order="stroke">BAIGORRIA</text>
<text x="2510" y="1145" font-size="27.3" fill="#5f6b73" stroke="#fff" stroke-width="4" stroke-linejoin="round" paint-order="stroke">CLUB OBRAS</text>
<text x="2510" y="1172" font-size="27.3" fill="#5f6b73" stroke="#fff" stroke-width="4" stroke-linejoin="round" paint-order="stroke">SANITARIAS</text>
<text x="1880" y="637" font-size="27.3" fill="#3a6fd6" stroke="#fff" stroke-width="4" stroke-linejoin="round" paint-order="stroke">FERRAMAT</text>
<text x="2762" y="1118" font-size="27.3" fill="#5f6b73" stroke="#fff" stroke-width="4" stroke-linejoin="round" paint-order="stroke">C</text>
</g>
<path d="M1723 562 A19 19 0 1 1 1761 562 C1761 574 1748 582 1742 600 C1736 582 1723 574 1723 562Z" fill="#72879a" stroke="#5d7083" stroke-width="1.2"/><circle cx="1742" cy="562" r="7" fill="#fff"/>
<path d="M1864 703 A19 19 0 1 1 1902 703 C1902 715 1889 723 1883 741 C1877 723 1864 715 1864 703Z" fill="#e4604e" stroke="#c44a3b" stroke-width="1.2"/><path d="M1870 698 h26 l-3 5 l1.5 7 h-23 l1.5 -7z" fill="#fff"/><path d="M1886 698 l2 -7 h2.5 l-1 7z" fill="#fff"/>
<path d="M1926 694 A19 19 0 1 1 1964 694 C1964 706 1951 714 1945 732 C1939 714 1926 706 1926 694Z" fill="#3ea55a" stroke="#2f8a47" stroke-width="1.2"/><circle cx="1945" cy="694" r="7" fill="#fff"/>
<path d="M1517 788 A19 19 0 1 1 1555 788 C1555 800 1542 808 1536 826 C1530 808 1517 800 1517 788Z" fill="#72879a" stroke="#5d7083" stroke-width="1.2"/><circle cx="1536" cy="788" r="7" fill="#fff"/>
<path d="M1844 888 A19 19 0 1 1 1882 888 C1882 900 1869 908 1863 926 C1857 908 1844 900 1844 888Z" fill="#72879a" stroke="#5d7083" stroke-width="1.2"/><path d="M1851 885 L1863 879 L1875 885 L1863 891Z" fill="#fff"/><path d="M1856 888 v6 q7 4 14 0 v-6 l-7 3.5z" fill="#fff"/>
<path d="M1910 995 A19 19 0 1 1 1948 995 C1948 1007 1935 1015 1929 1033 C1923 1015 1910 1007 1910 995Z" fill="#4a86ea" stroke="#3a70cc" stroke-width="1.2"/><path d="M1920 991 h18 v12 h-18z" fill="#fff"/><path d="M1924.5 991 v-3 a4.5 4.5 0 0 1 9 0 v3" stroke="#fff" stroke-width="2.2" fill="none"/><path d="M1924.5 996 q4.5 4.5 9 0" stroke="#4a86ea" stroke-width="2" fill="none"/>
<path d="M2302 813 A19 19 0 1 1 2340 813 C2340 825 2327 833 2321 851 C2315 833 2302 825 2302 813Z" fill="#72879a" stroke="#5d7083" stroke-width="1.2"/><circle cx="2321" cy="813" r="7" fill="#fff"/>
<path d="M2200 946 A19 19 0 1 1 2238 946 C2238 958 2225 966 2219 984 C2213 966 2200 958 2200 946Z" fill="#72879a" stroke="#5d7083" stroke-width="1.2"/><circle cx="2219" cy="946" r="7" fill="#fff"/>
<path d="M2371 775 A19 19 0 1 1 2409 775 C2409 787 2396 795 2390 813 C2384 795 2371 787 2371 775Z" fill="#3ea55a" stroke="#2f8a47" stroke-width="1.2"/><circle cx="2390" cy="775" r="7" fill="#fff"/>
<path d="M2715 845 A19 19 0 1 1 2753 845 C2753 857 2740 865 2734 883 C2728 865 2715 857 2715 845Z" fill="#3ea55a" stroke="#2f8a47" stroke-width="1.2"/><circle cx="2734" cy="845" r="7" fill="#fff"/>
<path d="M2576 556 A19 19 0 1 1 2614 556 C2614 568 2601 576 2595 594 C2589 576 2576 568 2576 556Z" fill="#e4604e" stroke="#c44a3b" stroke-width="1.2"/><path d="M2585 554 L2595 545 L2605 554 v11 h-20z" fill="#fff"/><path d="M2593.3 552 h3.4 v3.3 h3.3 v3.4 h-3.3 v3.3 h-3.4 v-3.3 h-3.3 v-3.4 h3.3z" fill="#e4604e"/>
<path d="M2753 562 A19 19 0 1 1 2791 562 C2791 574 2778 582 2772 600 C2766 582 2753 574 2753 562Z" fill="#72879a" stroke="#5d7083" stroke-width="1.2"/><circle cx="2772" cy="562" r="7" fill="#fff"/>
<path d="M2591 1007 A19 19 0 1 1 2629 1007 C2629 1019 2616 1027 2610 1045 C2604 1027 2591 1019 2591 1007Z" fill="#4a86ea" stroke="#3a70cc" stroke-width="1.2"/><path d="M2601 1003 h18 v12 h-18z" fill="#fff"/><path d="M2605.5 1003 v-3 a4.5 4.5 0 0 1 9 0 v3" stroke="#fff" stroke-width="2.2" fill="none"/><path d="M2605.5 1008 q4.5 4.5 9 0" stroke="#4a86ea" stroke-width="2" fill="none"/>
<path d="M2222 1071 A19 19 0 1 1 2260 1071 C2260 1083 2247 1091 2241 1109 C2235 1091 2222 1083 2222 1071Z" fill="#72879a" stroke="#5d7083" stroke-width="1.2"/><circle cx="2241" cy="1071" r="7" fill="#fff"/>
<path d="M2068 1128 A19 19 0 1 1 2106 1128 C2106 1140 2093 1148 2087 1166 C2081 1148 2068 1140 2068 1128Z" fill="#72879a" stroke="#5d7083" stroke-width="1.2"/><circle cx="2087" cy="1128" r="7" fill="#fff"/>
<path d="M2465 1136 A19 19 0 1 1 2503 1136 C2503 1148 2490 1156 2484 1174 C2478 1156 2465 1148 2465 1136Z" fill="#72879a" stroke="#5d7083" stroke-width="1.2"/><circle cx="2484" cy="1136" r="7" fill="#fff"/>
<path d="M1589 1064 A19 19 0 1 1 1627 1064 C1627 1076 1614 1084 1608 1102 C1602 1084 1589 1076 1589 1064Z" fill="#72879a" stroke="#5d7083" stroke-width="1.2"/><circle cx="1608" cy="1064" r="7" fill="#fff"/>
<path d="M1551 975 A19 19 0 1 1 1589 975 C1589 987 1576 995 1570 1013 C1564 995 1551 987 1551 975Z" fill="#4a86ea" stroke="#3a70cc" stroke-width="1.2"/><path d="M1561 971 h18 v12 h-18z" fill="#fff"/><path d="M1565.5 971 v-3 a4.5 4.5 0 0 1 9 0 v3" stroke="#fff" stroke-width="2.2" fill="none"/><path d="M1565.5 976 q4.5 4.5 9 0" stroke="#4a86ea" stroke-width="2" fill="none"/>
<path d="M1352 1090 A19 19 0 1 1 1390 1090 C1390 1102 1377 1110 1371 1128 C1365 1110 1352 1102 1352 1090Z" fill="#3ea55a" stroke="#2f8a47" stroke-width="1.2"/><path d="M1368 1078 L1376 1092 h-3.5 v4 h-5 v-4 h-3.5z" fill="#fff"/><rect x="1360" y="1095" width="22" height="2.8" fill="#fff"/><rect x="1377" y="1091" width="2.8" height="5" fill="#fff"/>
<path d="M1554 1168 A19 19 0 1 1 1592 1168 C1592 1180 1579 1188 1573 1206 C1567 1188 1554 1180 1554 1168Z" fill="#3ea55a" stroke="#2f8a47" stroke-width="1.2"/><path d="M1570 1156 L1578 1170 h-3.5 v4 h-5 v-4 h-3.5z" fill="#fff"/><rect x="1562" y="1173" width="22" height="2.8" fill="#fff"/><rect x="1579" y="1169" width="2.8" height="5" fill="#fff"/>
<path d="M1846 622 h16 l-8 16z" fill="#4a86ea"/>
<polygon points="2044,803 2196,759 2537,1026 2142,1163" fill="#8e2fab" fill-opacity="0.36" stroke="#8b28a9" stroke-width="3.5" stroke-linejoin="round"/>
<circle cx="2044" cy="803" r="8" fill="#fff" stroke="#8b28a9" stroke-width="2"/>
<circle cx="2196" cy="759" r="8" fill="#fff" stroke="#8b28a9" stroke-width="2"/>
<circle cx="2537" cy="1026" r="8" fill="#fff" stroke="#8b28a9" stroke-width="2"/>
<circle cx="2142" cy="1163" r="8" fill="#fff" stroke="#8b28a9" stroke-width="2"/>
<circle cx="2120" cy="782" r="7" fill="#fff" fill-opacity="0.45" stroke="#8b28a9" stroke-opacity="0.6" stroke-width="1.5"/>
<circle cx="2367" cy="890" r="7" fill="#fff" fill-opacity="0.45" stroke="#8b28a9" stroke-opacity="0.6" stroke-width="1.5"/>
<circle cx="2339" cy="1094" r="7" fill="#fff" fill-opacity="0.45" stroke="#8b28a9" stroke-opacity="0.6" stroke-width="1.5"/>
<circle cx="2093" cy="984" r="7" fill="#fff" fill-opacity="0.45" stroke="#8b28a9" stroke-opacity="0.6" stroke-width="1.5"/>
</g></svg>
<div class="a" style="left:1333px;top:548px;width:335px;height:79px;background:#fff;border-radius:2px;box-shadow:0 1px 4px -1px rgba(0,0,0,0.3);border-bottom:1px solid #c7cbd0"></div>
<div class="a" style="left:1470px;top:548px;width:1px;height:79px;background:#ebebeb"></div>
<div class="a" style="left:1367.0px;top:568.4px;font-size:35px;color:#000;font-weight:bold;font-style:normal;">Map</div>
<div class="a" style="left:1506.0px;top:567.5px;font-size:36px;color:#565656;font-weight:normal;font-style:normal;">Satellite</div>
<div class="a" style="left:1743px;top:547px;width:802px;height:79px;background:#fff;box-shadow:0 1px 4px -1px rgba(0,0,0,0.3);border-bottom:1px solid #c7cbd0"></div>
<svg class="ico" style="left:1895px;top:572px" width="24" height="28" viewBox="0 0 24 28"><rect x="1" y="3" width="22" height="3" fill="#6e7e8e"/><rect x="8" y="0" width="8" height="3" fill="#6e7e8e"/><path d="M3 7 h18 l-1.2 20 h-15.6z" fill="#6e7e8e"/><g stroke="#fff" stroke-width="1.6"><line x1="8" y1="10" x2="8" y2="24"/><line x1="12" y1="10" x2="12" y2="24"/><line x1="16" y1="10" x2="16" y2="24"/></g></svg>
<div class="a" style="left:1929.0px;top:575.2px;font-size:25.7px;color:#6e7e8e;font-weight:normal;font-style:normal;">Eliminar Polígono</div>
<svg class="ico" style="left:2217px;top:571px" width="34" height="30" viewBox="0 0 34 30"><path d="M2 15 Q17 0 32 15 Q17 30 2 15Z" fill="none" stroke="#6e7e8e" stroke-width="3.5"/><circle cx="17" cy="15" r="5" fill="#6e7e8e"/><line x1="5" y1="2" x2="30" y2="28" stroke="#fff" stroke-width="5"/><line x1="5" y1="2" x2="30" y2="28" stroke="#6e7e8e" stroke-width="3"/></svg>
<div class="a" style="left:2257.0px;top:575.2px;font-size:25.8px;color:#6e7e8e;font-weight:normal;font-style:normal;">Ocultar otras</div>
<div class="a" style="left:2673px;top:547px;width:80px;height:79px;background:#fff;border-radius:2px;box-shadow:0 1px 4px -1px rgba(0,0,0,0.3);border-bottom:1px solid #c7cbd0"></div>
<svg class="ico" style="left:2695px;top:569px" width="36" height="36" viewBox="0 0 36 36"><path d="M2 11 V2 H11 M25 2 H34 V11 M34 25 V34 H25 M11 34 H2 V25" fill="none" stroke="#666" stroke-width="4"/></svg>
<div class="a" style="left:2674px;top:974px;width:79px;height:79px;background:#fff;border-radius:2px;box-shadow:0 1px 4px -1px rgba(0,0,0,0.3);border-bottom:1px solid #c7cbd0"></div>
<svg class="ico" style="left:2690px;top:982px" width="46" height="64" viewBox="0 0 46 64"><circle cx="23" cy="11" r="9" fill="#f5b31a" stroke="#d99a10" stroke-width="1.5"/><path d="M13 22 Q23 19 33 22 L38 44 Q38 47 35 46 L32 40 L31 62 L25 62 L23 46 L21 62 L15 62 L14 40 L11 46 Q8 47 8 44 Z" fill="#f5b31a" stroke="#d99a10" stroke-width="1.5"/><path d="M18 22 L23 30 L28 22" fill="#d98a2a"/></svg>
<div class="a" style="left:2674px;top:1117px;width:79px;height:162px;background:#fff;border-radius:2px;box-shadow:0 1px 4px -1px rgba(0,0,0,0.3);border-bottom:1px solid #c7cbd0"></div>
<div class="a" style="left:2684px;top:1198px;width:59px;height:1px;background:#e6e6e6"></div>
<svg class="ico" style="left:2692px;top:1137px" width="44" height="44" viewBox="0 0 44 44"><g stroke="#666" stroke-width="6"><line x1="22" y1="4" x2="22" y2="40"/><line x1="4" y1="22" x2="40" y2="22"/></g></svg>
<div class="a" style="left:2696px;top:1237px;width:36px;height:6px;background:#666"></div>
<div class="a" style="left:1334px;top:1278.2px;font-size:34px;letter-spacing:-0.5px"><span style="color:#4285f4">G</span><span style="color:#ea4335">o</span><span style="color:#fbbc05">o</span><span style="color:#4285f4">g</span><span style="color:#34a853">l</span><span style="color:#ea4335">e</span></div>
<div class="a" style="left:1997px;top:1303px;width:776px;height:23px;background:rgba(245,245,245,0.7)"></div>
<div class="a" style="left:2012.0px;top:1305.1px;font-size:20px;color:#222;font-weight:normal;font-style:normal;">Keyboard shortcuts</div>
<div class="a" style="left:2210.0px;top:1305.1px;font-size:20px;color:#222;font-weight:normal;font-style:normal;">Map data ©2023 Google</div>
<div class="a" style="left:2451.0px;top:1305.1px;font-size:20px;color:#222;font-weight:normal;font-style:normal;">Terms of Use</div>
<div class="a" style="left:2594.0px;top:1305.1px;font-size:20px;color:#222;font-weight:normal;font-style:normal;">Report a map error</div>
<div id="sideedge"></div>
<div id="bottomshade"></div>
</body></html>
